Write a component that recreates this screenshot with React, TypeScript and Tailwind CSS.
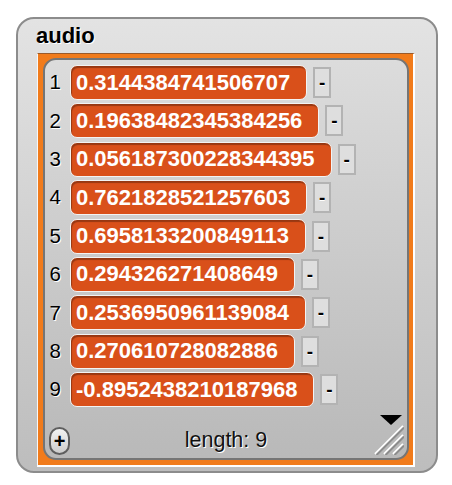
const items = [
  '0.3144384741506707',
  '0.19638482345384256',
  '0.056187300228344395',
  '0.7621828521257603',
  '0.6958133200849113',
  '0.294326271408649',
  '0.2536950961139084',
  '0.270610728082886',
  '-0.8952438210187968',
]

function ResizeHandle() {
  return (
    <svg width="30" height="30" viewBox="0 0 30 30" className="absolute bottom-[3px] right-[3px]">
      <g strokeWidth="2">
        <line x1="1" y1="29" x2="29" y2="1" stroke="#ffffff" />
        <line x1="2.5" y1="30" x2="30" y2="2.5" stroke="#8c8c8c" />
        <line x1="10" y1="29" x2="29" y2="10" stroke="#ffffff" />
        <line x1="11.5" y1="30" x2="30" y2="11.5" stroke="#8c8c8c" />
        <line x1="19" y1="29" x2="29" y2="19" stroke="#ffffff" />
        <line x1="20.5" y1="30" x2="30" y2="20.5" stroke="#8c8c8c" />
      </g>
    </svg>
  )
}

export default function App() {
  return (
    <div className="min-h-[485px] bg-white pl-[16px] pt-[17px] font-['Liberation_Sans',Arial,sans-serif]">
      <div className="w-[422px] rounded-[18px] border-2 border-[#8c8c8c] bg-linear-to-b from-[#e3e3e3] to-[#bdbdbd] pb-[4px]">
        <div className="pl-[18px] pt-[5px] mb-[5px] text-[22px] font-bold leading-[24px] text-black [text-shadow:1px_1px_0_#ffffff]">
          audio
        </div>

        <div className="ml-[19px] w-[378px] border-t border-l border-t-[#9a5a2a] border-l-[#f7f7f7] border-r-2 border-b-2 border-r-white border-b-white bg-[#f17b1b] pl-[5px] pt-[4px] pr-[4px] pb-[5px]">
          <div className="relative rounded-[13px] border-2 border-[#757575] bg-linear-to-b from-[#dcdcdc] to-[#b9b9b9]">
            <div className="flex flex-col gap-[3.4px] pt-[5px] pl-[3px]">
              {items.map((v, i) => (
                <div key={i} className="flex h-[35px] items-center">
                  <span className="w-[13px] text-right text-[20.5px] leading-none text-black [text-shadow:1px_1px_0_#ffffff]">
                    {i + 1}
                  </span>
                  <div className="ml-[9px] flex h-[35px] items-center rounded-[7px] border-[1.5px] border-[#f3f3f3] bg-[#d9501a] pl-[5px] pr-[16px] shadow-[inset_1px_2px_1px_rgba(0,0,0,0.3)]">
                    <span className="text-[22px] font-bold leading-none text-white">{v}</span>
                  </div>
                  <div className="ml-[6px] flex h-[31px] w-[18px] items-center justify-center border-2 border-[#b3b3b3] bg-[#dedede]">
                    <span className="text-[19px] font-bold leading-none text-black [text-shadow:0_1px_0_#ffffff]">-</span>
                  </div>
                </div>
              ))}
            </div>

            <div className="flex h-[51px] items-end pb-[3px]">
              <div className="ml-[4px] flex h-[28px] w-[21px] items-center justify-center rounded-full border-2 border-[#5e5e5e] bg-linear-to-b from-[#f2f2f2] to-[#cdcdcd]">
                <span className="text-[20px] font-bold leading-none text-black">+</span>
              </div>
              <div className="flex-1 pb-[1px] text-center text-[21.5px] leading-[28px] text-[#111] [text-shadow:1px_1px_0_#ffffff]">
                length: 9
              </div>
              <div className="w-[25px]" />
            </div>

            <div className="absolute bottom-[33px] right-[5px] h-0 w-0 border-x-[11px] border-t-[10px] border-x-transparent border-t-black" />
            <ResizeHandle />
          </div>
        </div>
      </div>
    </div>
  )
}
